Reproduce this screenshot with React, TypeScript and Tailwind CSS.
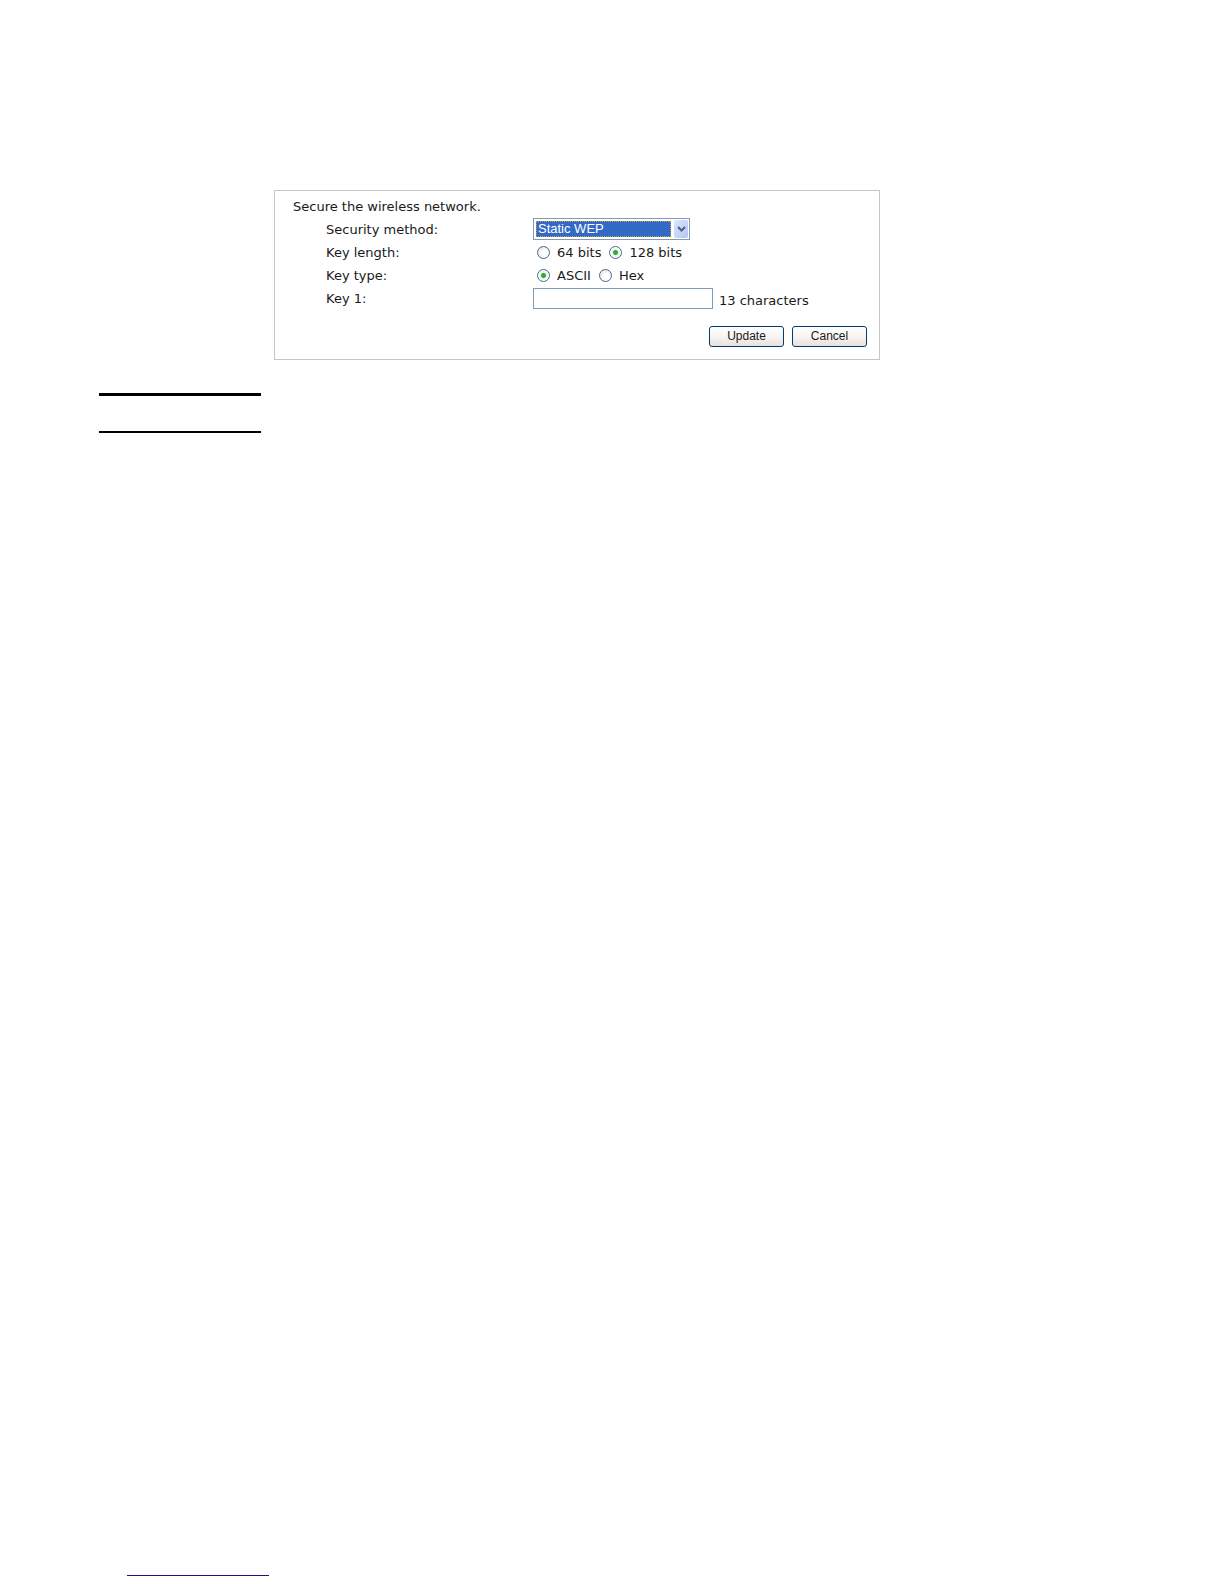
import { useState } from "react";
import type { ReactNode } from "react";

const KEY_LENGTHS = [
  { value: "64", label: "64 bits" },
  { value: "128", label: "128 bits" },
];

const KEY_TYPES = [
  { value: "ascii", label: "ASCII" },
  { value: "hex", label: "Hex" },
];

const METHODS = ["Static WEP", "Dynamic WEP", "WPA", "802.1x"];

function Row({ label, htmlFor, labelId, children }: { label: string; htmlFor?: string; labelId?: string; children: ReactNode }) {
  return (
    <div className="flex h-[23px] items-center pl-[33px]">
      <div className="w-[207px] shrink-0">
        {htmlFor ? <label htmlFor={htmlFor}>{label}</label> : <span id={labelId}>{label}</span>}
      </div>
      {children}
    </div>
  );
}

type RadioProps = {
  name: string;
  labelledBy: string;
  options: { value: string; label: string }[];
  value: string;
  onChange: (value: string) => void;
};

function RadioGroup({ name, labelledBy, options, value, onChange }: RadioProps) {
  return (
    <div role="radiogroup" aria-labelledby={labelledBy} className="flex gap-2 pl-1">
      {options.map((o) => (
        <label key={o.value} className="flex items-center gap-[7px]">
          <input
            type="radio"
            name={name}
            checked={value === o.value}
            onChange={() => onChange(o.value)}
            className="size-[13px] appearance-none rounded-full border border-[#44688c] bg-[radial-gradient(circle_at_65%_65%,#ffffff_30%,#dcdcd6_100%)] checked:bg-[radial-gradient(circle,#2fae2f_0px,#2fae2f_2px,#e9f2e9_3px,#ffffff_5px)]"
          />
          {o.label}
        </label>
      ))}
    </div>
  );
}

function PushButton({ children }: { children: ReactNode }) {
  return (
    <button
      type="button"
      className="h-[21px] w-[75px] rounded-[3px] border border-[#003c74] bg-linear-to-b from-white via-[#f7f5f3] to-[#e8e0dc] pb-0.5 font-['Liberation_Sans',Arial,sans-serif] text-[12px] leading-4"
    >
      {children}
    </button>
  );
}

export default function App() {
  const [method, setMethod] = useState("Static WEP");
  const [keyLength, setKeyLength] = useState("128");
  const [keyType, setKeyType] = useState("ascii");
  const [key1, setKey1] = useState("");

  return (
    <div className="flex min-h-screen flex-col bg-white pt-[190px] pb-2 font-['DejaVu_Sans',Verdana,sans-serif] text-[13px] leading-4 text-[#1a1a1a]">
      <main className="px-[99px]">
        <form className="ml-[175px] max-w-[606px] border border-[#c6c6c6] pt-2 pr-3 pb-3 pl-[18px]">
          <p>Secure the wireless network.</p>
          <div className="pt-[3px]">
            <Row label="Security method:" htmlFor="method">
              <div className="mb-px flex h-[22px] w-[157px] gap-[3px] border border-[#7f9db9] py-px pr-px pl-0.5">
                <select
                  id="method"
                  value={method}
                  onChange={(e) => setMethod(e.target.value)}
                  className="my-px min-w-0 flex-1 appearance-none border border-dotted border-[#d9953a] bg-[#316ac5] pl-px font-['Liberation_Sans',Arial,sans-serif] text-[13px] leading-[14px] text-white outline-none"
                >
                  {METHODS.map((m) => (
                    <option key={m}>{m}</option>
                  ))}
                </select>
                <span className="pointer-events-none flex w-[14px] items-center justify-center rounded-[2px] bg-linear-to-br from-[#dbe5fd] to-[#b5c6f4]">
                  <svg viewBox="0 0 9 6" className="h-1.5 w-[9px]" fill="none" stroke="#4d6185" strokeWidth="2">
                    <path d="M1 1l3.500 3.500L8 1" />
                  </svg>
                </span>
              </div>
            </Row>
            <Row label="Key length:" labelId="key-length">
              <RadioGroup name="length" labelledBy="key-length" options={KEY_LENGTHS} value={keyLength} onChange={setKeyLength} />
            </Row>
            <Row label="Key type:" labelId="key-type">
              <RadioGroup name="type" labelledBy="key-type" options={KEY_TYPES} value={keyType} onChange={setKeyType} />
            </Row>
            <Row label="Key 1:" htmlFor="key1">
              <input
                id="key1"
                type="text"
                maxLength={13}
                value={key1}
                onChange={(e) => setKey1(e.target.value)}
                className="h-[21px] w-[180px] border border-[#7f9db9] px-1 outline-none"
              />
              <span className="pt-1 pl-1.5">13 characters</span>
            </Row>
          </div>
          <div className="mt-4 flex justify-end gap-2">
            <PushButton>Update</PushButton>
            <PushButton>Cancel</PushButton>
          </div>
        </form>

        <div className="mt-[33px] w-[162px]">
          <hr className="border-t-[3px] border-black" />
          <hr className="mt-[35px] border-t-2 border-black" />
        </div>
      </main>

      <footer className="mt-auto px-[127px]">
        <div className="h-px w-[142px] bg-[#14148c]" />
      </footer>
    </div>
  );
}
